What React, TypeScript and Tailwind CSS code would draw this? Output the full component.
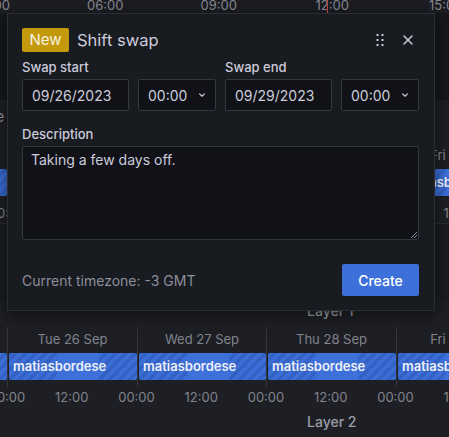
import React from "react";

const cols = [
  { w: "w-[130px]", day: "Mon 25 Sep" },
  { w: "w-[130px]", day: "Tue 26 Sep" },
  { w: "w-[129px]", day: "Wed 27 Sep" },
  { w: "w-[130px]", day: "Thu 28 Sep" },
  { w: "w-[130px]", day: "Fri 29 Sep" },
];

const timeLabels = ["00:00", "12:00", "00:00", "12:00", "00:00", "12:00", "00:00", "12:00"];

const stripe =
  "bg-[image:repeating-linear-gradient(135deg,#3b6ed6_0px,#3b6ed6_3.5px,#3462c4_3.5px,#3462c4_7px)]";

function ShiftBar() {
  return (
    <div className="relative ml-[1px] h-[27px] rounded-[2px] overflow-hidden flex">
      <div className={`w-[48px] shrink-0 ${stripe}`} />
      <div className="w-[42px] shrink-0 bg-[#3d71d9]" />
      <div className={`flex-1 ${stripe}`} />
      <div className="absolute inset-0 flex items-center pl-[4px] text-[13px] font-semibold text-[#eef0f8] whitespace-nowrap">
        matiasbordese
      </div>
    </div>
  );
}

function Week() {
  return (
    <div>
      <div className="flex ml-[-123px]">
        {cols.map((c, i) => (
          <div key={i} className={`${c.w} shrink-0 flex flex-col border-l border-[#34363c]`}>
            <div className="h-[26px] flex items-center justify-center text-[13px] text-[#82838c] whitespace-nowrap">
              {c.day}
            </div>
            <ShiftBar />
            <div className="h-[7px]" />
          </div>
        ))}
      </div>
      <div className="flex ml-[-25.4px] mt-[2px] h-[16px] text-[13px] leading-[16px] text-[#82838c]">
        {timeLabels.map((t, i) => (
          <div key={i} className="w-[64.75px] shrink-0 text-center">
            {t}
          </div>
        ))}
      </div>
    </div>
  );
}

function Field({ label, date }: { label: string; date: string }) {
  return (
    <div className="flex flex-col">
      <div className="text-[13px] leading-[16px] font-medium text-[#ccccdc] mb-[4px]">{label}</div>
      <div className="flex gap-[9px]">
        <input
          readOnly
          defaultValue={date}
          className="w-[107px] h-[32px] bg-[#111217] border border-[#34373d] rounded-[2px] pl-[9px] text-[14px] text-[#ccccdc] outline-none"
        />
        <div className="w-[78px] h-[32px] bg-[#111217] border border-[#34373d] rounded-[2px] pl-[9px] pr-[8px] flex items-center justify-between text-[14px] text-[#ccccdc]">
          <span>00:00</span>
          <svg width="10" height="10" viewBox="0 0 10 10" fill="none">
            <path d="M2.6 3.9 L5 6.2 L7.4 3.9" stroke="#ccccdc" strokeWidth="1.2" strokeLinecap="round" strokeLinejoin="round" />
          </svg>
        </div>
      </div>
    </div>
  );
}

export default function App() {
  return (
    <div className="relative w-[449px] h-[437px] overflow-hidden bg-[#1d1f24] font-['Inter',sans-serif] text-[#ccccdc]">
      {/* top time axis */}
      <div className="relative h-[13px] bg-[#1b1d22]">
        <div className="flex ml-[-65px] text-[13px] leading-[11px] text-[#878893]">
          {["03:00", "06:00", "09:00", "12:00", "15:00"].map((t) => (
            <div key={t} className="w-[113.5px] shrink-0 text-center">
              {t}
            </div>
          ))}
        </div>
        <div className="absolute left-[327px] top-0 h-full w-px bg-[#c9463d]" />
      </div>

      {/* area behind modal */}
      <div className="h-[87px] bg-[#15171b]" />
      <div className="h-[43px] pt-[8px] text-[15px] leading-[18px] text-[#8e8e9c] ml-[-98px] whitespace-nowrap">
        Final schedule
      </div>
      <Week />
      <div className="h-[2px]" />
      <div className="h-[78px] border-t border-[#2a2c31] bg-[#1a1c20]" />

      {/* Layer 1 */}
      <div className="h-[20px] pl-[307px] text-[14px] leading-[20px] font-medium text-[#9c9da6]">Layer 1</div>
      <div className="h-[6px]" />
      <Week />
      <div className="h-[7px]" />
      <div className="h-[20px] pl-[307px] text-[14px] leading-[20px] font-medium text-[#9c9da6]">Layer 2</div>

      {/* modal */}
      <div className="absolute left-[7px] top-[13px] w-[428px] h-[298px] bg-[#181b1f] border border-[#2b2e34] shadow-[0_4px_14px_rgba(0,0,0,0.5)] pt-[14px] pl-[14px] pr-[15px] flex flex-col">
        <div className="flex items-center h-[24px]">
          <span className="h-[24px] w-[47px] flex items-center justify-center bg-[#c4990c] rounded-[2px] text-[15px] text-[#f6f1e1]">
            New
          </span>
          <span className="ml-[8px] text-[16.5px] text-[#ccccdc]">Shift swap</span>
          <div className="ml-auto flex items-center gap-[12.5px] mr-[3px]">
            <svg width="16" height="16" viewBox="0 0 16 16" fill="#ccccdc">
              <rect x="4.5" y="2" width="2" height="2" rx="0.5" />
              <rect x="9.5" y="2" width="2" height="2" rx="0.5" />
              <rect x="4.5" y="7" width="2" height="2" rx="0.5" />
              <rect x="9.5" y="7" width="2" height="2" rx="0.5" />
              <rect x="4.5" y="12" width="2" height="2" rx="0.5" />
              <rect x="9.5" y="12" width="2" height="2" rx="0.5" />
            </svg>
            <svg width="16" height="16" viewBox="0 0 16 16" fill="none">
              <path d="M4 4 L12 12 M12 4 L4 12" stroke="#ccccdc" strokeWidth="1.5" strokeLinecap="round" />
            </svg>
          </div>
        </div>

        <div className="flex gap-[9px] mt-[7px]">
          <Field label="Swap start" date="09/26/2023" />
          <Field label="Swap end" date="09/29/2023" />
        </div>

        <div className="mt-[15px] text-[13px] leading-[16px] font-medium text-[#ccccdc] mb-[4px]">Description</div>
        <div className="relative">
          <textarea
            readOnly
            defaultValue="Taking a few days off."
            className="block w-full h-[94px] resize-none bg-[#111217] border border-[#34373d] rounded-[2px] px-[8px] pt-[3px] text-[14px] leading-[20px] text-[#ccccdc] outline-none"
          />
          <svg className="absolute right-[1px] bottom-[1px]" width="9" height="9" viewBox="0 0 9 9" fill="none">
            <path d="M8 2 L2 8 M8 5 L5 8" stroke="#8e8e9c" strokeWidth="1" />
          </svg>
        </div>

        <div className="mt-[24px] h-[32px] flex items-center justify-between">
          <span className="text-[14px] text-[#8e8e9c]">Current timezone: -3 GMT</span>
          <button className="w-[77px] h-[32px] bg-[#3d71d9] rounded-[2px] text-[14px] font-medium text-white">
            Create
          </button>
        </div>
      </div>
    </div>
  );
}
